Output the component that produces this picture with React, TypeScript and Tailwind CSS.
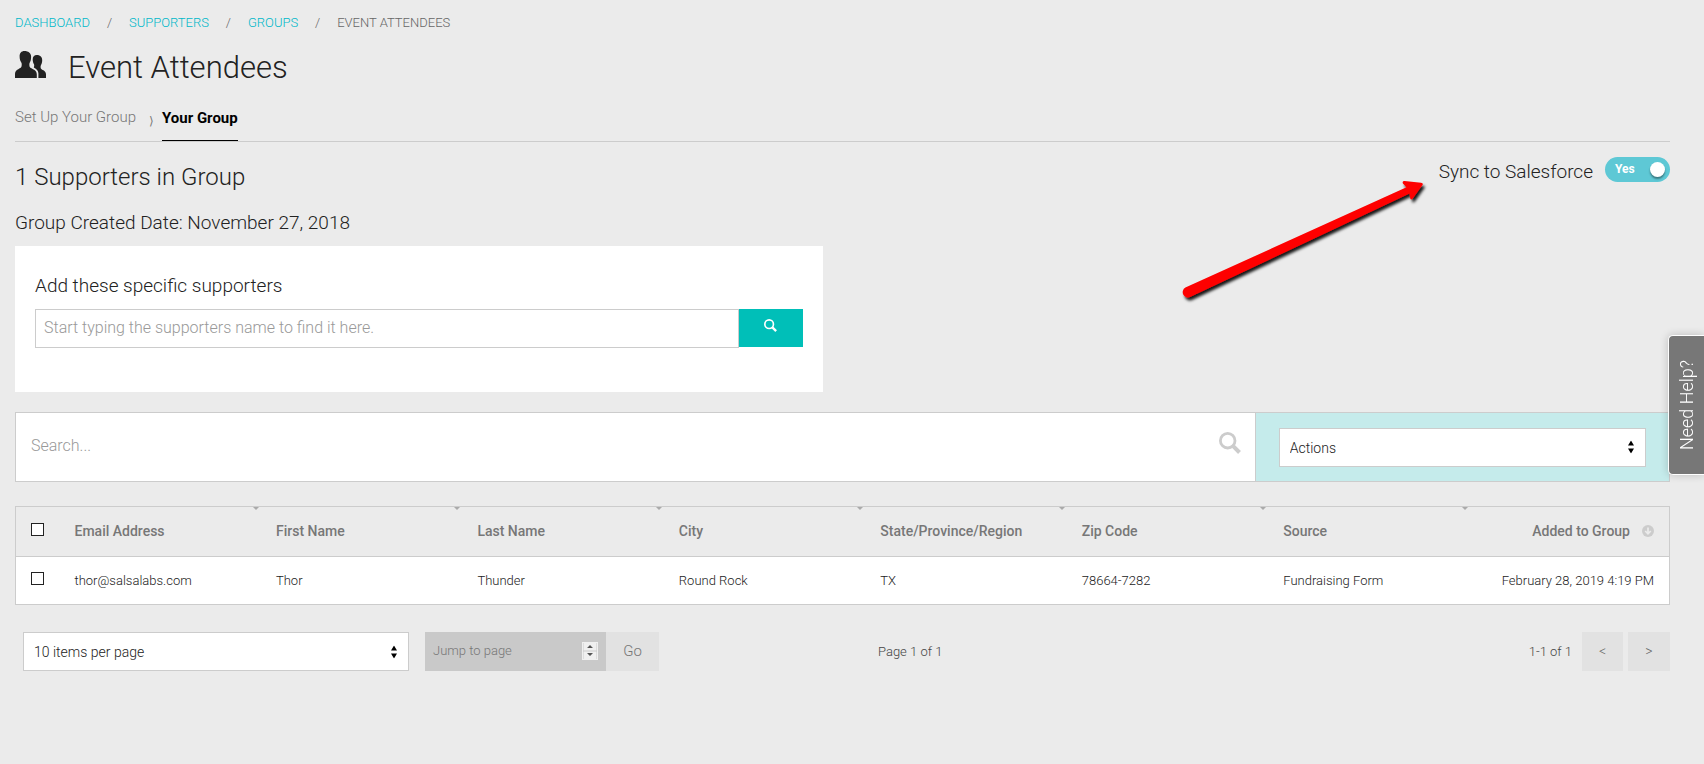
import React from "react";

const crumbs = ["DASHBOARD", "SUPPORTERS", "GROUPS"];

const columns = [
  "Email Address",
  "First Name",
  "Last Name",
  "City",
  "State/Province/Region",
  "Zip Code",
  "Source",
];

const row = [
  "thor@salsalabs.com",
  "Thor",
  "Thunder",
  "Round Rock",
  "TX",
  "78664-7282",
  "Fundraising Form",
];

function PeopleIcon() {
  return (
    <svg className="mb-1.5" width="31" height="28" viewBox="0 0 31 28" fill="#222" aria-hidden="true">
      <path d="M9.500 0C6.200 0 4.600 2.200 4.600 5.300c0 3 .7 4.800 1.700 6.300.7 1.100.6 4-.3 4.900C4.200 18.200 0 18.600 0 23.200V27h21.800v-3.800c0-4.600-4.900-5-6.700-6.700-.9-.9-1-3.800-.3-4.900 1-1.500 1.300-3.300 1.300-6.300C16.100 2.200 13.200 0 9.500 0z" />
      <path d="M21.700 4c-2.500 0-4 1.700-4 4.300 0 2.300.5 3.700 1.200 4.800.5.800.4 2.600-.1 3.300 1.900 1.100 4.600 2.500 4.600 6.200V27H31v-3.600c0-3.400-3.300-4-4.700-5.300-.9-.9-.9-3.300-.3-4.200.8-1.200 1.200-2.700 1.200-4.900C27.200 5.700 24.800 4 21.700 4z" />
    </svg>
  );
}

function SearchIcon({ className }: { className: string }) {
  return (
    <svg className={className} viewBox="0 0 22 22" fill="none" stroke="currentColor" aria-hidden="true">
      <circle cx="8.700" cy="8.700" r="7.300" strokeWidth="2.800" />
      <path d="M14.200 14.200l6.300 6.300" strokeWidth="4" />
    </svg>
  );
}

function SortArrows() {
  return (
    <svg
      className="pointer-events-none absolute top-1/2 right-3 -translate-y-1/2"
      width="6"
      height="13"
      viewBox="0 0 6 13"
      fill="#000"
      aria-hidden="true"
    >
      <path d="M3 0l3 5H0zM3 13l3-5H0z" />
    </svg>
  );
}

function Tick() {
  return (
    <svg className="absolute top-0 -right-1" width="8" height="3" viewBox="0 0 8 3" fill="#aaa" aria-hidden="true">
      <path d="M1 0h6L4 3z" />
    </svg>
  );
}

function Arrow() {
  return (
    <svg
      className="pointer-events-none absolute top-[170px] right-[270px]"
      width="260"
      height="140"
      viewBox="1174 170 260 140"
      aria-hidden="true"
    >
      <defs>
        <filter id="arrowShadow" x="-10%" y="-10%" width="120%" height="130%">
          <feDropShadow dx="2" dy="3" stdDeviation="1.500" floodColor="#000" floodOpacity="0.900" />
        </filter>
      </defs>
      <path
        d="M1185.400 287.600L1406.500 187.300L1402.900 183.500Q1401.900 181 1404.500 181L1421 182.700Q1424 183.300 1422.100 185.500L1413 198.200Q1410.500 201 1410.100 197.500L1409.500 193.500L1190.500 296.800A5.200 5.200 0 0 1 1185.400 287.600Z"
        fill="#fe0000"
        filter="url(#arrowShadow)"
      />
    </svg>
  );
}

export default function App() {
  return (
    <div className="relative flex min-h-screen flex-col overflow-x-hidden bg-[#ebebeb] pr-[34px] pl-[15px] font-[Roboto,sans-serif] font-light text-[#222]">
      <nav aria-label="Breadcrumb" className="pt-[13px]">
        <ol className="flex text-[13px] leading-5">
          {crumbs.map((c) => (
            <li key={c} className="flex">
              <a href="#" className="text-[#00b8c9]">
                {c}
              </a>
              <span className="w-[39px] text-center text-[#666]">/</span>
            </li>
          ))}
          <li className="text-[#666]">EVENT ATTENDEES</li>
        </ol>
      </nav>

      <header className="mt-[15px] flex h-10 items-center gap-[22px]">
        <PeopleIcon />
        <h1 className="text-[31px] leading-10">Event Attendees</h1>
      </header>

      <nav aria-label="Steps" className="mt-[15px] flex h-[39px] items-stretch border-b border-[#ccc]">
        <a href="#" className="pt-0.5 text-[15px] leading-6 text-[#777]">
          Set Up Your Group
        </a>
        <span className="w-[26px] pt-1.5 pl-1.5 text-center text-[12px] leading-6 text-[#777]">⟩</span>
        <a href="#" aria-current="page" className="border-b border-black pt-[3px] text-[15px] leading-6 font-bold text-black">
          Your Group
        </a>
      </nav>

      <section className="flex justify-between">
        <div>
          <h2 className="mt-[19px] text-[24px] leading-8">1 Supporters in Group</h2>
          <p className="mt-4 text-[19px] leading-7">Group Created Date: November 27, 2018</p>
        </div>
        <label className="mt-[15px] flex items-start gap-3 self-start text-[19px] leading-[30px]">
          Sync to Salesforce
          <span className="relative flex h-[25px] w-[65px] items-center rounded-full bg-[#5ec8d5]">
            <input type="checkbox" role="switch" defaultChecked className="absolute inset-0 cursor-pointer opacity-0" />
            <span className="pb-0.5 pl-2.5 text-[12px] font-bold text-white">Yes</span>
            <span className="absolute right-[5px] size-[15px] rounded-full bg-white shadow-[0_2px_2px_rgba(0,0,0,0.4)]" />
          </span>
        </label>
      </section>

      <section className="mt-[9px] h-[146px] w-[calc(50%-20px)] bg-white px-5 pt-6">
        <label htmlFor="add" className="block text-[19px] leading-8">
          Add these specific supporters
        </label>
        <div className="mt-[7px] flex items-start">
          <input
            id="add"
            type="text"
            placeholder="Start typing the supporters name to find it here."
            className="h-[39px] flex-1 border border-[#ccc] bg-white px-2 pb-0.5 text-[16px] outline-none placeholder:text-[#999]"
          />
          <button type="button" aria-label="Find supporter" className="flex h-[38px] w-16 justify-center bg-[#00bfb8] pt-2.5 text-white">
            <SearchIcon className="size-[13px]" />
          </button>
        </div>
      </section>

      <section className="mt-5 flex h-[70px] border border-[#ccc] bg-white">
        <div className="flex flex-1 items-center pr-3.5 pl-[15px]">
          <input
            type="search"
            aria-label="Search"
            placeholder="Search..."
            className="h-10 flex-1 pb-1 text-[16px] outline-none placeholder:text-[#999]"
          />
          <SearchIcon className="mb-2 size-[22px] text-[#ccc]" />
        </div>
        <div className="flex w-[calc(25%+1px)] items-center border-l border-[#ccc] bg-[#c5ebeb] px-[23px]">
          <div className="relative w-full">
            <select
              aria-label="Actions"
              className="h-[39px] w-full appearance-none border border-[#ccc] bg-white px-2.5 pt-0.5 text-[14px] text-[#222] outline-none"
            >
              <option>Actions</option>
            </select>
            <SortArrows />
          </div>
        </div>
      </section>

      <table className="mt-6 w-full table-fixed border border-[#ccc] text-left text-[13px]">
        <thead>
          <tr className="h-[50px] border-b border-[#ccc] text-[14px] text-[#777]">
            <th className="w-[39px] pb-1 pl-[15px]">
              <input type="checkbox" aria-label="Select all" className="block size-[13px] appearance-none border border-[#222] bg-white" />
            </th>
            {columns.map((c) => (
              <th key={c} className="relative w-[12.18%] pl-5 font-medium">
                {c}
                <Tick />
              </th>
            ))}
            <th className="pr-[15px] font-medium">
              <span className="flex items-center justify-end gap-3">
                Added to Group
                <svg className="mb-0.5" width="12" height="12" viewBox="0 0 12 12" aria-hidden="true">
                  <circle cx="6" cy="6" r="6" fill="#ccc" />
                  <path d="M6 2.500v6M3.200 6L6 8.800L8.800 6" fill="none" stroke="#ebebeb" strokeWidth="1.700" />
                </svg>
              </span>
            </th>
          </tr>
        </thead>
        <tbody>
          <tr className="h-12 bg-white">
            <td className="pb-1 pl-[15px]">
              <input type="checkbox" aria-label="Select Thor Thunder" className="block size-[13px] appearance-none border border-[#222] bg-white" />
            </td>
            {row.map((c) => (
              <td key={c} className="pl-5">
                {c}
              </td>
            ))}
            <td className="pr-[15px] text-right whitespace-nowrap">February 28, 2019 4:19 PM</td>
          </tr>
        </tbody>
      </table>

      <footer className="mt-[27px] flex h-[39px] items-stretch pl-2 text-[13px] text-[#444]">
        <div className="relative w-[386px]">
          <select
            aria-label="Items per page"
            className="h-full w-full appearance-none border border-[#ccc] bg-white px-2.5 pt-0.5 text-[14px] text-[#222] outline-none"
          >
            <option>10 items per page</option>
          </select>
          <SortArrows />
        </div>
        <div className="relative ml-4 w-[181px]">
          <input
            type="text"
            inputMode="numeric"
            aria-label="Jump to page"
            placeholder="Jump to page"
            className="h-full w-full bg-[#c9c9c9] px-2 pb-0.5 text-[13px] outline-none placeholder:text-[#777]"
          />
          <svg className="absolute top-2.5 right-2" width="16" height="18" viewBox="0 0 16 18" aria-hidden="true">
            <path d="M0 0h16v18H0z" fill="#f0f0f0" />
            <path d="M1.500 1v16M14.500 1v16" stroke="#ddd" />
            <path d="M1 9h14" stroke="#ccc" />
            <path d="M8 3l3 3H5zM8 14l3-3H5z" fill="#555" />
          </svg>
        </div>
        <button type="button" className="w-[53px] bg-[#e2e2e2] text-[15px] text-[#777]">
          Go
        </button>
        <div className="flex flex-1 items-center justify-between pl-[219px]">
          <span>Page 1 of 1</span>
          <span className="pr-2.5">1-1 of 1</span>
        </div>
        <div className="flex gap-[5px]">
          <button type="button" aria-label="Previous page" className="w-[41px] bg-[#e2e2e2] text-[14px] text-[#666]">
            &lt;
          </button>
          <button type="button" aria-label="Next page" className="w-[42px] bg-[#e2e2e2] text-[14px] text-[#666]">
            &gt;
          </button>
        </div>
      </footer>

      <Arrow />

      <button
        type="button"
        className="absolute top-[335px] right-0 flex h-[140px] w-9 items-center justify-center rounded-l-[5px] border border-r-0 border-white bg-[#777] text-[18px] text-white shadow-[0_0_8px_rgba(0,0,0,0.2)]"
      >
        <span className="rotate-180 [writing-mode:vertical-rl]">Need Help?</span>
      </button>
    </div>
  );
}
